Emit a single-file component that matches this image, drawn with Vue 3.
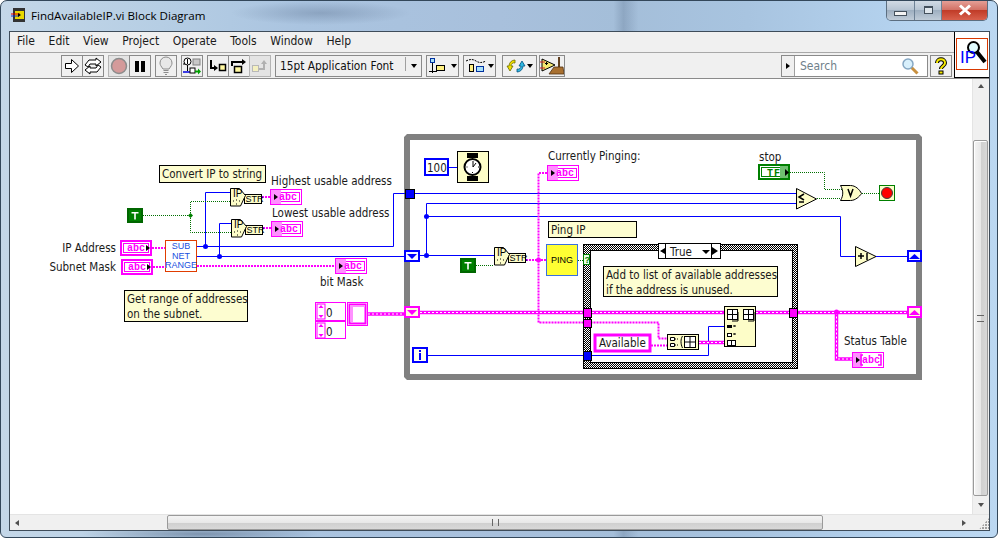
<script setup>
const menus = ['File', 'Edit', 'View', 'Project', 'Operate', 'Tools', 'Window', 'Help']

const blueWires = [
  '197,245.5 393.5,245.5 393.5,192.5 405,192.5',
  '197,255.5 405,255.5',
  '205.5,245.5 205.5,191.5 230,191.5',
  '219.5,255.5 219.5,222.5 231,222.5',
  '413,192.5 796,192.5',
  '420,254.5 494,254.5',
  '426.5,254.5 426.5,202.5 796,202.5',
  '426.5,215.5 840.5,215.5 840.5,255.5 856,255.5',
  '876,255.5 908,255.5',
  '449,166.5 457,166.5',
  '428,354.5 708.5,354.5 708.5,325.5 724,325.5'
]
const greenWires = [
  '143,214.5 190.5,214.5',
  '230,200.5 190.5,200.5 190.5,231.5 231,231.5',
  '817,197.5 824.5,197.5 840,197.5',
  '790,171.5 824.5,171.5 824.5,188.5 842,188.5',
  '860,192.5 879,192.5',
  '476,264.5 494,264.5',
  '578,259.5 584,259.5'
]
const stringWires = [
  '152,247 165,247',
  '153,266 165,266',
  '197,265 335,265',
  '262,196 270,196',
  '263,227 271,227',
  '526,259 546,259',
  '547,172 538.5,172 538.5,321.5 658.5,321.5 658.5,337.5 668,337.5',
  '651,344.5 667,344.5'
]
const arrayWires = [
  '368,313 404,313',
  '420,311.5 724,311.5',
  '699,341.5 724,341.5',
  '756,311.5 908,311.5',
  '836.5,311.5 836.5,358 853,358'
]
const blueDots = [[205.5, 245.5], [219.5, 255.5], [426.5, 215.5], [426.5, 254.5]]
const stringDots = [[538.5, 259], [836.5, 311]]
const tunnels = [
  { x: 405, y: 188, w: 9, h: 9, fill: '#0000ff' },
  { x: 583, y: 307, w: 8, h: 9, fill: '#ff00ff' },
  { x: 583, y: 318, w: 8, h: 8, fill: '#ff00ff' },
  { x: 583, y: 350, w: 8, h: 9, fill: '#0000ff' },
  { x: 789, y: 307, w: 8, h: 9, fill: '#ff00ff' }
]
const terminals = [
  { x: 120, y: 239, control: true },
  { x: 121, y: 258, control: true },
  { x: 270, y: 188 },
  { x: 271, y: 220 },
  { x: 335, y: 257 },
  { x: 547, y: 164 }
]
const ipNodes = [
  { x: 230, y: 187 },
  { x: 231, y: 218 },
  { x: 494, y: 246 }
]
const labels = [
  { x: 116, y: 251, text: 'IP Address', end: true },
  { x: 116, y: 270, text: 'Subnet Mask', end: true },
  { x: 271, y: 184, text: 'Highest usable address' },
  { x: 272, y: 216, text: 'Lowest usable address' },
  { x: 320, y: 285, text: 'bit Mask' },
  { x: 548, y: 159, text: 'Currently Pinging:' },
  { x: 759, y: 160, text: 'stop' },
  { x: 844, y: 344, text: 'Status Table' }
]
const notes = [
  { x: 159.5, y: 164.5, w: 106, h: 17, lines: ['Convert IP to string'] },
  { x: 124.5, y: 289.5, w: 123, h: 31, lines: ['Get range of addresses', 'on the subnet.'] },
  { x: 548.5, y: 220.5, w: 88, h: 16, lines: ['Ping IP'] },
  { x: 603.5, y: 265.5, w: 174, h: 30, lines: ['Add to list of available addresses', 'if the address is unused.'] }
]
</script>

<template>
  <div class="desktop">
    <header class="titlebar">
      <svg class="title-icon" width="16" height="16" viewBox="0 0 16 16">
        <rect x="2" y="1" width="12" height="14" fill="#333" />
        <rect x="4" y="4" width="9" height="8" fill="#e8d800" />
        <path d="M0 7h9" stroke="#e00000" stroke-width="1" />
        <path d="M0 9h8" stroke="#1030d0" stroke-width="1" />
        <path d="M7 6l3 2-3 2z" fill="#000" />
      </svg>
      <span class="title-text">FindAvailableIP.vi Block Diagram</span>
      <div class="win-btns">
        <div class="win-btn min"><span class="min-bar"></span></div>
        <div class="win-btn max"><span class="max-box"></span></div>
        <div class="win-btn close">
          <svg width="14" height="12" viewBox="0 0 14 12">
            <path d="M2 1.500l10 9M12 1.500l-10 9" stroke="#fff" stroke-width="3" />
          </svg>
        </div>
      </div>
    </header>

    <div class="frame">
      <div class="top">
        <div class="bars">
          <nav class="menubar">
            <span v-for="m in menus" :key="m" class="menu-item">{{ m }}</span>
          </nav>
          <div class="toolbar">
            <div class="group">
              <div class="tb">
                <svg width="18" height="18" viewBox="0 0 18 18"><path d="M2.500 6.500h6v-4l7 6.500-7 6.500v-4h-6z" fill="#fff" stroke="#000" /></svg>
              </div>
              <div class="tb">
                <svg width="20" height="18" viewBox="0 0 20 18">
                  <path d="M2 8l4-5h7V1l5 4-5 4V7H7L5 10z" fill="#fff" stroke="#000" />
                  <path d="M18 10l-4 5H7v2l-5-4 5-4v2h6l2-3z" fill="#fff" stroke="#000" />
                </svg>
              </div>
            </div>
            <div class="group">
              <div class="tb off">
                <svg width="18" height="18" viewBox="0 0 18 18"><circle cx="9" cy="9" r="7.500" fill="#d49a9a" stroke="#8c8c8c" stroke-width="1.500" /></svg>
              </div>
              <div class="tb">
                <svg width="14" height="14" viewBox="0 0 14 14"><path d="M2 2h4v11H2zM8 2h4v11H8z" fill="#000" /></svg>
              </div>
            </div>
            <div class="tb">
              <svg width="16" height="20" viewBox="0 0 16 20">
                <path d="M5 13C3 10 2 9 2 7a6 6 0 0 1 12 0c0 2-1 3-3 6z" fill="#e8e8e8" stroke="#8c8c8c" />
                <path d="M5.500 14.500h5M5.500 16.500h5M7 18.500h2" stroke="#8c8c8c" />
              </svg>
            </div>
            <div class="tb">
              <svg width="20" height="20" viewBox="0 0 20 20">
                <circle cx="5.500" cy="5.500" r="3.500" fill="#fff" stroke="#000" />
                <path d="M5.500 3v5M3 8l-2 0" stroke="#000" />
                <rect x="11" y="3" width="7" height="6" fill="#c8c8c8" stroke="#808080" />
                <path d="M5.500 9v6" stroke="#000" />
                <path d="M1 16h12" stroke="#0000e0" stroke-width="1.500" />
                <rect x="8" y="12" width="5" height="5" fill="#fff" stroke="#000" />
                <path d="M13 14.500h3v-2l3 3-3 3v-2h-3z" fill="#00a000" />
              </svg>
            </div>
            <div class="group">
              <div class="tb">
                <svg width="18" height="16" viewBox="0 0 18 16">
                  <path d="M2 2v8h5" fill="none" stroke="#000" stroke-width="2" />
                  <path d="M5 7l4 3-4 3z" fill="#000" />
                  <rect x="10.500" y="6.500" width="6" height="6" fill="#fff8a0" stroke="#000" stroke-width="1.500" />
                </svg>
              </div>
              <div class="tb">
                <svg width="18" height="18" viewBox="0 0 18 18">
                  <path d="M2 9V5h11" fill="none" stroke="#000" stroke-width="2" />
                  <path d="M12 2l4 3-4 3z" fill="#000" />
                  <rect x="4.500" y="9.500" width="7" height="6" fill="#fff8a0" stroke="#000" stroke-width="1.500" />
                </svg>
              </div>
              <div class="tb off">
                <svg width="18" height="16" viewBox="0 0 18 16">
                  <rect x="1.500" y="7.500" width="6" height="6" fill="#f4f0c0" stroke="#b8b8b8" />
                  <path d="M8 11h5V6" fill="none" stroke="#b0b0b0" stroke-width="2" />
                  <path d="M10 6l3-4 3 4z" fill="#b0b0b0" />
                </svg>
              </div>
            </div>
            <div class="font-ring">
              <span class="font-name">15pt Application Font</span>
              <span class="ring-arrow"></span>
            </div>
            <div class="tb wide align">
              <svg width="22" height="18" viewBox="0 0 22 18">
                <rect x="2.500" y="1.500" width="4" height="4" fill="#a8e0f8" stroke="#0030a0" />
                <rect x="8.500" y="8.500" width="8" height="5" fill="#fff080" stroke="#000" />
                <path d="M1 14.500h8M4.500 6v10" stroke="#000" />
              </svg>
              <span class="caret"></span>
            </div>
            <div class="tb wide dist">
              <svg width="22" height="18" viewBox="0 0 22 18">
                <path d="M1 4c4-2 7-2 10 0s6 2 10 0" fill="none" stroke="#000" stroke-dasharray="2 1" />
                <rect x="4.500" y="7.500" width="4" height="7" fill="#fff080" stroke="#000" />
                <rect x="11.500" y="9.500" width="7" height="5" fill="#a8e0f8" stroke="#0030a0" />
              </svg>
              <span class="caret"></span>
            </div>
            <div class="tb wide reorder">
              <svg width="20" height="18" viewBox="0 0 20 18">
                <path d="M9 3a6 6 0 0 0-6 6l-2 0 3 5 3-5-2 0a3 3 0 0 1 4-3z" fill="#f0e000" stroke="#6a6a00" stroke-width=".8" />
                <path d="M11 15a6 6 0 0 0 6-6l2 0-3-5-3 5 2 0a3 3 0 0 1-4 3z" fill="#30b8e0" stroke="#005080" stroke-width=".8" />
              </svg>
              <span class="caret"></span>
            </div>
            <div class="tb cleanup">
              <svg width="24" height="20" viewBox="0 0 24 20">
                <path d="M2 3l13 6-13 6z" fill="#f4e870" stroke="#000" />
                <path d="M0 6h5M0 12h5" stroke="#d02020" />
                <path d="M5 7.500h3M6.500 6v3" stroke="#000" />
                <path d="M19 1v10" stroke="#604020" stroke-width="2" />
                <path d="M14 11h9l1 7H9z" fill="#a87030" stroke="#503010" stroke-width=".8" />
              </svg>
            </div>
            <div class="spacer"></div>
            <div class="search">
              <div class="search-arrow"><span></span></div>
              <span class="search-text">Search</span>
              <svg width="18" height="18" viewBox="0 0 18 18">
                <path d="M10.500 10.500l6 6" stroke="#c89040" stroke-width="3" />
                <circle cx="7" cy="7" r="5" fill="#d8f0fc" stroke="#86a8c4" stroke-width="1.500" />
              </svg>
            </div>
            <div class="tb help">
              <svg width="14" height="18" viewBox="0 0 14 18">
                <path d="M3 6c0-5 8-5 8 0 0 3-4 3-4 6" fill="none" stroke="#000" stroke-width="4" />
                <path d="M3 6c0-5 8-5 8 0 0 3-4 3-4 6" fill="none" stroke="#f4e800" stroke-width="2" />
                <rect x="5" y="14" width="4" height="3" fill="#f4e800" stroke="#000" />
              </svg>
            </div>
          </div>
        </div>
        <div class="vi-pane">
          <div class="vi-icon">
            <svg class="vi-glass" width="22" height="24" viewBox="0 0 22 24">
              <path d="M11 12l8 10" stroke="#000" stroke-width="4" />
              <circle cx="7.500" cy="7.500" r="5.500" fill="#e0fbff" stroke="#000" stroke-width="2" />
            </svg>
            <span class="vi-ip">IP</span>
          </div>
        </div>
      </div>

      <div class="middle">
        <div class="canvas">
          <svg class="diagram" width="962" height="434" viewBox="10 78 962 434">
            <defs>
              <pattern id="checker" width="2" height="2" patternUnits="userSpaceOnUse">
                <rect width="2" height="2" fill="#fff" />
                <rect width="1" height="1" fill="#000" />
                <rect x="1" y="1" width="1" height="1" fill="#000" />
              </pattern>
            </defs>

            <!-- while loop -->
            <path
              fill="#808080"
              fill-rule="evenodd"
              d="M404 136l3-3h512l3 3v243H407l-3-3zM410 139v234h506V139z"
            />

            <!-- case structure -->
            <rect x="583.500" y="243.500" width="214" height="124" fill="url(#checker)" stroke="#000" />
            <rect x="590.500" y="249.500" width="202" height="112" fill="#fff" stroke="#000" />

            <polyline v-for="p in blueWires" :key="p" :points="p" class="wire blue" />
            <polyline v-for="p in greenWires" :key="p" :points="p" class="wire green" />
            <polyline v-for="p in stringWires" :key="p" :points="p" class="wire str" />
            <g v-for="p in arrayWires" :key="p">
              <polyline :points="p" class="wire arr" />
              <polyline :points="p" class="wire arr-core" />
            </g>
            <circle v-for="d in blueDots" :key="d[0] + '-' + d[1]" :cx="d[0]" :cy="d[1]" r="2.500" fill="#0000ff" />
            <circle v-for="d in stringDots" :key="d[0]" :cx="d[0]" :cy="d[1]" r="2.500" fill="#ff00ff" />
            <path d="M190.500 212l2.500 2.500-2.500 2.500-2.500-2.500z" fill="#008000" />

            <rect
              v-for="t in tunnels"
              :key="t.x + '-' + t.y"
              :x="t.x + 0.5"
              :y="t.y + 0.5"
              :width="t.w"
              :height="t.h"
              :fill="t.fill"
              stroke="#000"
            />

            <!-- string controls and indicators -->
            <g v-for="t in terminals" :key="t.x + '-' + t.y" :transform="`translate(${t.x} ${t.y})`">
              <template v-if="t.control">
                <rect x="1" y="1" width="30" height="14" fill="#fff" stroke="#ff00ff" stroke-width="2" />
                <rect x="3.500" y="3.500" width="25" height="9" fill="none" stroke="#ff00ff" />
                <text x="7" y="11" class="abc">abc</text>
                <path d="M26 5l4 3-4 3z" fill="#000" />
              </template>
              <template v-else>
                <rect x="0.500" y="0.500" width="31" height="15" fill="#fff" stroke="#ff00ff" />
                <rect x="2.500" y="3.500" width="27" height="9" fill="none" stroke="#ff00ff" />
                <rect x="1" y="1" width="10" height="14" fill="#ff90ff" />
                <text x="9" y="11" class="abc">abc</text>
                <path d="M4 5l4 3-4 3z" fill="#000" />
              </template>
            </g>

            <!-- status table indicator -->
            <rect x="852.500" y="351.500" width="31" height="15" fill="#fff" stroke="#ff00ff" />
            <rect x="853" y="352" width="9" height="14" fill="#ff90ff" />
            <text x="862" y="362" class="abc">abc</text>
            <path d="M856 356l4 3-4 3z" fill="#000" />
            <path d="M863 354h-2v10h2M878 354h3v10h-3" fill="none" stroke="#ff00ff" stroke-width="1.500" />

            <!-- ip to string primitives -->
            <g v-for="n in ipNodes" :key="n.x" :transform="`translate(${n.x} ${n.y})`">
              <rect x="14.500" y="6.500" width="17" height="9" fill="#fdfdc8" stroke="#000" />
              <path d="M0.500 0.500h9l6 7-1 2-4 8.500h-10z" fill="#fdfdc8" stroke="#000" />
              <text x="3" y="9" class="node-text">IP</text>
              <text x="15.500" y="14" class="node-text small">STR</text>
              <path d="M3 13h1M6 16h1M9 13h1M6 12h1" stroke="#000" />
            </g>

            <!-- boolean constants -->
            <g v-for="c in [[127, 207], [460, 257]]" :key="c[0]" :transform="`translate(${c[0]} ${c[1]})`">
              <rect x="1" y="1" width="14" height="13" fill="#fff" stroke="#006600" stroke-width="2" />
              <rect x="2" y="2" width="12" height="11" fill="#007f00" />
              <path d="M4.500 4h7v1.500h-2.700v6h-1.600v-6H4.500z" fill="#fff" />
            </g>

            <!-- subnet subvi -->
            <rect x="165.500" y="239.500" width="31" height="31" fill="#fff" stroke="#e03c00" />
            <text x="181" y="248" class="subvi">SUB</text>
            <text x="181" y="257.500" class="subvi">NET</text>
            <text x="181" y="267" class="subvi">RANGE</text>

            <!-- array constant -->
            <rect x="315.500" y="301.500" width="30" height="36" fill="#fff" stroke="#ff00ff" />
            <path d="M316 320h30" stroke="#ff00ff" stroke-width="2" />
            <rect x="317" y="303" width="8" height="15" fill="#fff" stroke="#ff00ff" />
            <rect x="317" y="322" width="8" height="15" fill="#fff" stroke="#ff00ff" />
            <path d="M321 304l2.500 3h-5zM321 317l2.500-3h-5zM321 323l2.500 3h-5zM321 336l2.500-3h-5z" fill="#ff00ff" />
            <text x="326" y="316" class="label">0</text>
            <text x="326" y="335" class="label">0</text>
            <rect x="347.500" y="301.500" width="20" height="23" fill="#fff" stroke="#ff00ff" />
            <rect x="349.500" y="303.500" width="16" height="19" fill="#fff" stroke="#ff00ff" stroke-width="2" />
            <path d="M350 304h15v2h-11v15h-4z" fill="#ff90ff" />
            <path d="M353 306h11v15h-11z" fill="#fff" />

            <!-- shift registers -->
            <rect x="405" y="250" width="14" height="10" fill="#f8f8ff" stroke="#0000ff" stroke-width="2" />
            <path d="M407 253h10l-5 5z" fill="#0000ff" />
            <rect x="405" y="306" width="14" height="10" fill="#ffffd8" stroke="#ff00ff" stroke-width="2" />
            <path d="M407 309h10l-5 5z" fill="#ff00ff" />
            <rect x="908" y="250" width="13" height="10" fill="#f8f8ff" stroke="#0000ff" stroke-width="2" />
            <path d="M909 258h11l-5.500-5z" fill="#0000ff" />
            <rect x="908" y="306" width="13" height="10" fill="#ffffd8" stroke="#ff00ff" stroke-width="2" />
            <path d="M909 314h11l-5.500-5z" fill="#ff00ff" />

            <!-- loop iteration terminal -->
            <rect x="413" y="347" width="14" height="14" fill="#fffff0" stroke="#0000ff" stroke-width="2" />
            <rect x="419" y="349" width="2" height="2" fill="#0000ff" />
            <rect x="419" y="352" width="2" height="7" fill="#0000ff" />

            <!-- numeric constant and wait -->
            <rect x="425" y="158" width="23" height="16" fill="#fff" stroke="#0000ff" stroke-width="2" />
            <text x="427" y="171" class="label">100</text>
            <rect x="457.500" y="150.500" width="31" height="31" fill="#fdfdc8" stroke="#000" />
            <path d="M467 152h11v5h-11zM467 175h11v5h-11z" fill="#000" />
            <circle cx="472.500" cy="166" r="8" fill="#fff" stroke="#000" stroke-width="2" />
            <path d="M473 160v6l3-4M466.500 166h1M478 166h1M472.500 171v1" stroke="#000" fill="none" />

            <!-- stop control and condition -->
            <rect x="759" y="164" width="30" height="14" fill="#fff" stroke="#007f00" stroke-width="2" />
            <rect x="761.500" y="166.500" width="25" height="9" fill="none" stroke="#007f00" />
            <rect x="780" y="165" width="8" height="12" fill="#70c070" />
            <text x="767" y="175" class="tf">TF</text>
            <path d="M785 168l4 3.500-4 3.500z" fill="#000" />
            <path d="M796.500 187.500l20 10.500-20 10z" fill="#fdfdc8" stroke="#000" />
            <path d="M804 193l-5 3 5 3M799 201h5" fill="none" stroke="#000" stroke-width="1.500" />
            <path d="M840.500 184.500h10c5 0 9 4 11 8-2 3-6 7-11 7h-10c3-5 3-10 0-15z" fill="#fdfdc8" stroke="#000" />
            <path d="M848 188l2.500 7 2.500-7" fill="none" stroke="#000" stroke-width="1.500" />
            <rect x="879.500" y="184.500" width="15" height="15" fill="#fdfdc8" stroke="#007f00" />
            <circle cx="887" cy="192" r="5.500" fill="#ff0000" stroke="#404040" />
            <path d="M855.500 245.500l20.500 10-20.500 10z" fill="#fdfdc8" stroke="#000" />
            <path d="M858 255h6M861 252v6M867 252v7" fill="none" stroke="#000" stroke-width="1.500" />

            <!-- ping subvi and selector -->
            <rect x="546.500" y="243.500" width="31" height="31" fill="#ffff33" stroke="#3a70e0" />
            <text x="562" y="262" class="ping">PING</text>
            <rect x="583.500" y="253.500" width="6" height="10" fill="#e8ffe8" stroke="#007f00" />
            <text x="584.500" y="262" class="q">?</text>

            <!-- case selector -->
            <rect x="658.500" y="242.500" width="62" height="15" fill="#fff" stroke="#000" />
            <path d="M665.500 243v15M711.500 243v15" stroke="#000" />
            <path d="M665 247l-5 3 5 3zM712 246l6 4-6 4z" fill="#000" />
            <path d="M702 249h8l-4 4z" fill="#000" />
            <text x="670" y="255" class="label">True</text>

            <!-- available constant -->
            <rect x="595" y="334" width="55" height="16" fill="#fff" stroke="#ff00ff" stroke-width="3" />
            <text x="599" y="346" class="label">Available</text>

            <!-- build array -->
            <rect x="667.500" y="333.500" width="31" height="15" fill="#fdfdc8" stroke="#000" />
            <path d="M670.500 336.500h4v3h-4zM670.500 342.500h4v3h-4z" fill="#fff" stroke="#000" />
            <path d="M675 338h4M675 344h4" stroke="#000" stroke-dasharray="1 1" />
            <path d="M682.500 335c-2 3-2 8 0 12" fill="none" stroke="#000" />
            <rect x="684.500" y="335.500" width="11" height="11" fill="#fff" stroke="#000" />
            <path d="M690 336v10M685 341h10" stroke="#000" />

            <!-- insert into array -->
            <rect x="724.500" y="305.500" width="31" height="40" fill="#fdfdc8" stroke="#000" />
            <g fill="#fff" stroke="#000">
              <rect x="727.500" y="308.500" width="10" height="10" />
              <rect x="743.500" y="308.500" width="10" height="10" />
            </g>
            <path d="M732.500 309v9M728 313.500h9M748.500 309v9M744 313.500h9" stroke="#000" />
            <path d="M738 311v9h-6M754 311v9h-6" fill="none" stroke="#000" />
            <rect x="727" y="324" width="5" height="3" fill="#000" />
            <path d="M733 325h2M735 324v2M733 333h2M735 332v2" stroke="#000" />
            <rect x="727.500" y="332.500" width="4" height="3" fill="#fff" stroke="#000" />
            <rect x="727.500" y="339.500" width="8" height="5" fill="#fff" stroke="#000" />
            <path d="M731.500 340v4" stroke="#000" />

            <!-- free labels -->
            <text
              v-for="l in labels"
              :key="l.text"
              :x="l.x"
              :y="l.y"
              :text-anchor="l.end ? 'end' : 'start'"
              class="label"
            >{{ l.text }}</text>

            <!-- comments -->
            <g v-for="n in notes" :key="n.lines[0]">
              <rect :x="n.x" :y="n.y" :width="n.w" :height="n.h" fill="#fdfdd0" stroke="#000" />
              <text
                v-for="(line, i) in n.lines"
                :key="line"
                :x="n.x + 2.500"
                :y="n.y + 12.500 + i * 15"
                class="label"
              >{{ line }}</text>
            </g>
          </svg>
        </div>

        <div class="vscroll">
          <div class="v-arrow up"></div>
          <div class="v-thumb"><span class="v-grip"></span></div>
          <div class="v-arrow down"></div>
        </div>
      </div>

      <div class="hscroll">
        <div class="h-arrow left"></div>
        <div class="h-thumb"><span class="h-grip"></span></div>
        <div class="h-arrow right"></div>
        <div class="size-grip"></div>
      </div>
    </div>
  </div>
</template>

<style scoped>
.desktop {
  width: 998px;
  height: 538px;
  box-sizing: border-box;
  overflow: hidden;
  display: flex;
  flex-direction: column;
  border: 1px solid #33475a;
  border-radius: 7px 7px 6px 6px;
  background:
    radial-gradient(ellipse 120px 7px at 200px 533px, rgba(60, 80, 110, 0.45), rgba(60, 80, 110, 0) 100%),
    radial-gradient(ellipse 90px 12px at 320px 12px, rgba(70, 90, 120, 0.3), rgba(70, 90, 120, 0) 100%),
    linear-gradient(90deg, rgba(40, 60, 90, 0) 61.5%, rgba(40, 60, 90, 0.18) 62.5%, rgba(40, 60, 90, 0) 64%),
    linear-gradient(90deg, #c4d7e8 0, #b6cee4 16%, #aac4e0 30%, #a8c0dc 50%, #a4bed9 62%, #a8c4e0 75%, #b4d2ee 90%, #bcd8f2 100%);
  font-family: "DejaVu Sans Condensed", "DejaVu Sans", sans-serif;
  font-stretch: condensed;
}

.titlebar {
  height: 30px;
  flex: none;
  display: flex;
  align-items: flex-start;
  padding-left: 10px;
}
.title-icon {
  margin-top: 6px;
}
.title-text {
  margin: 6px 0 0 4px;
  font-family: "Open Sans", sans-serif;
  font-stretch: normal;
  font-size: 11.600px;
  line-height: 18px;
  color: #000;
}
.win-btns {
  margin: -1px 9px 0 auto;
  display: flex;
  height: 20px;
  border: 1px solid #5c6e80;
  border-top: 0;
  border-radius: 0 0 5px 5px;
  overflow: hidden;
}
.win-btn {
  display: flex;
  align-items: center;
  justify-content: center;
  border-right: 1px solid #6e8296;
  background: linear-gradient(#d4dde6, #b6c4d2 50%, #9eafc0 52%, #c0ccd8);
}
.min {
  width: 27px;
}
.max {
  width: 26px;
}
.close {
  width: 45px;
  border-right: 0;
  background: linear-gradient(#e6a49c, #d27266 48%, #c03c28 52%, #d8604c);
}
.min-bar {
  width: 11px;
  height: 3px;
  margin-top: 6px;
  background: #f4f4f4;
  border: 1px solid #44505c;
}
.max-box {
  width: 7px;
  height: 5px;
  background: #dfe6ec;
  border: 1px solid #44505c;
  border-top-width: 2px;
}

.frame {
  flex: none;
  width: 979px;
  margin-left: 8px;
  border: 1px solid #3e4c5a;
  background: #f0f0f0;
  display: flex;
  flex-direction: column;
}

.top {
  display: flex;
  height: 46px;
}
.bars {
  flex: 1;
  min-width: 0;
}
.menubar {
  height: 21px;
  display: flex;
  gap: 13.600px;
  padding: 0 0 2px 7px;
  align-items: center;
  border-bottom: 1px solid #a8a8a8;
  box-sizing: border-box;
  font-size: 12px;
  color: #1a1a1a;
}
.toolbar {
  height: 25px;
  box-sizing: border-box;
  display: flex;
  align-items: flex-start;
  padding: 2px 2px 0 51px;
  gap: 4px;
}
.group {
  display: flex;
}
.group .tb + .tb {
  margin-left: -1px;
}
.tb {
  box-sizing: border-box;
  width: 22px;
  height: 22px;
  flex: none;
  display: flex;
  align-items: center;
  justify-content: center;
  gap: 1px;
  border: 1px solid #8a8a8a;
  background: #f0f0f0;
}
.tb.off {
  background: #e4e4e4;
  border-color: #b4b4b4;
}
.wide {
  width: 33px;
}
.reorder {
  width: 35px;
  margin-left: 2px;
}
.cleanup {
  width: 26px;
  margin-left: -2px;
}
.caret {
  width: 0;
  height: 0;
  border: 3px solid transparent;
  border-top: 4px solid #000;
  border-bottom: 0;
}
.font-ring {
  box-sizing: border-box;
  width: 147px;
  height: 22px;
  display: flex;
  align-items: center;
  border: 1px solid #8a8a8a;
  padding-left: 4px;
  font-size: 11.800px;
  color: #111;
}
.font-name {
  flex: 1;
  white-space: nowrap;
}
.ring-arrow {
  width: 0;
  height: 0;
  margin-right: 4px;
  border: 3.500px solid transparent;
  border-top: 4px solid #000;
  border-bottom: 0;
  position: relative;
}
.ring-arrow::before {
  content: "";
  position: absolute;
  left: -9px;
  top: -11px;
  height: 14px;
  border-left: 1px solid #a0a0a0;
}
.spacer {
  flex: 1;
}
.search {
  box-sizing: border-box;
  width: 147px;
  height: 22px;
  display: flex;
  align-items: center;
  border: 1px solid #8a8a8a;
  background: #fff;
  padding-right: 8px;
  margin-right: -2px;
}
.search-arrow {
  width: 12px;
  height: 20px;
  display: flex;
  align-items: center;
  justify-content: center;
  background: #f0f0f0;
  border-right: 1px solid #a0a0a0;
  margin-right: 5px;
}
.search-arrow span {
  border: 3px solid transparent;
  border-left: 4px solid #000;
  border-right: 0;
}
.search-text {
  flex: 1;
  font-size: 12px;
  color: #70808a;
}

.vi-pane {
  box-sizing: border-box;
  width: 35px;
  flex: none;
  background: #fff;
  border-left: 1px solid #000;
  border-bottom: 1px solid #000;
  padding: 6px 0 0 1px;
}
.vi-icon {
  position: relative;
  box-sizing: border-box;
  width: 32px;
  height: 32px;
  border: 1px solid #d83800;
  background: #fff;
}
.vi-ip {
  position: absolute;
  left: 3px;
  top: 10px;
  font: 17px/18px "Liberation Sans", sans-serif;
  color: #0000ff;
}
.vi-glass {
  position: absolute;
  left: 9px;
  top: 1px;
}

.middle {
  display: flex;
  height: 435px;
  border-top: 1px solid #8a8a8a;
}
.canvas {
  width: 962px;
  flex: none;
  background: #fff;
}
.diagram {
  display: block;
}
.vscroll {
  flex: 1;
  display: flex;
  flex-direction: column;
  align-items: stretch;
  background: #f0f0f0;
  border-left: 1px solid #e4e4e4;
}
.v-arrow {
  height: 18px;
  flex: none;
  display: flex;
  justify-content: center;
  align-items: center;
}
.v-arrow.up {
  height: 61px;
  align-items: flex-start;
}
.v-arrow.up::before {
  content: "";
  margin-top: 5px;
  border: 3px solid transparent;
  border-bottom: 4px solid #505050;
  border-top: 0;
}
.v-arrow.down::before {
  content: "";
  border: 3px solid transparent;
  border-top: 4px solid #505050;
  border-bottom: 0;
}
.v-thumb {
  flex: 1;
  display: flex;
  align-items: center;
  justify-content: center;
  border: 1px solid #9a9a9a;
  border-radius: 2px;
  margin: 0 1px 0 0;
  background: linear-gradient(90deg, #f4f4f4, #e8e8e8 50%, #cfcfcf 52%, #d8d8d8);
  box-shadow: inset 1px 1px 0 #fff;
}
.v-grip {
  width: 7px;
  height: 5px;
  border-top: 1px solid #666;
  border-bottom: 1px solid #666;
  position: relative;
}
.hscroll {
  height: 16px;
  display: flex;
  align-items: stretch;
  background: #f0f0f0;
  border-top: 1px solid #e4e4e4;
  box-sizing: border-box;
}
.h-arrow {
  display: flex;
  align-items: center;
}
.h-arrow.left {
  width: 157px;
  flex: none;
  padding-left: 5px;
  box-sizing: border-box;
}
.h-arrow.left::before {
  content: "";
  border: 3px solid transparent;
  border-right: 4px solid #505050;
  border-left: 0;
}
.h-arrow.right {
  flex: 1;
  justify-content: flex-end;
  padding-right: 10px;
}
.h-arrow.right::before {
  content: "";
  border: 3px solid transparent;
  border-left: 4px solid #505050;
  border-right: 0;
}
.size-grip {
  width: 13px;
  flex: none;
  background: radial-gradient(circle at 1px 1px, #a0a0a0 1px, transparent 1px) 0 0 / 3px 3px;
  clip-path: polygon(100% 20%, 100% 100%, 20% 100%);
}
.h-thumb {
  width: 656px;
  flex: none;
  display: flex;
  align-items: center;
  justify-content: center;
  border: 1px solid #9a9a9a;
  border-radius: 2px;
  box-sizing: border-box;
  background: linear-gradient(#f4f4f4, #e8e8e8 50%, #cfcfcf 52%, #d8d8d8);
}
.h-grip {
  width: 5px;
  height: 7px;
  border-left: 1px solid #666;
  border-right: 1px solid #666;
}

.label {
  font-family: "DejaVu Sans Condensed", "DejaVu Sans", sans-serif;
  font-stretch: condensed;
  font-size: 11.500px;
  fill: #1a1a1a;
}
.wire {
  fill: none;
}
.blue {
  stroke: #0000ff;
  stroke-width: 1;
}
.green {
  stroke: #007000;
  stroke-width: 1;
  stroke-dasharray: 1 1;
}
.str {
  stroke: #ff00ff;
  stroke-width: 2;
  stroke-dasharray: 2 1;
}
.arr {
  stroke: #ff00ff;
  stroke-width: 3.500;
}
.arr-core {
  stroke: #fff;
  stroke-width: 1;
  stroke-dasharray: 2 2;
}
.abc {
  font: bold 10px "Liberation Mono", monospace;
  fill: #ff00ff;
}
.tf {
  font: bold 10px "Liberation Mono", monospace;
  fill: #007f00;
  letter-spacing: 1px;
}
.node-text {
  font: 10px "Liberation Sans", sans-serif;
  fill: #000;
}
.node-text.small {
  font-size: 9px;
  letter-spacing: 0;
}
.subvi {
  font: 9px "Liberation Sans", sans-serif;
  fill: #2050e0;
  text-anchor: middle;
}
.ping {
  font: 9px "Liberation Sans", sans-serif;
  fill: #000;
  text-anchor: middle;
}
.q {
  font: bold 9px "Liberation Sans", sans-serif;
  fill: #007f00;
}
</style>

<style>
body {
  overflow: hidden;
  background: #fff;
}
</style>
